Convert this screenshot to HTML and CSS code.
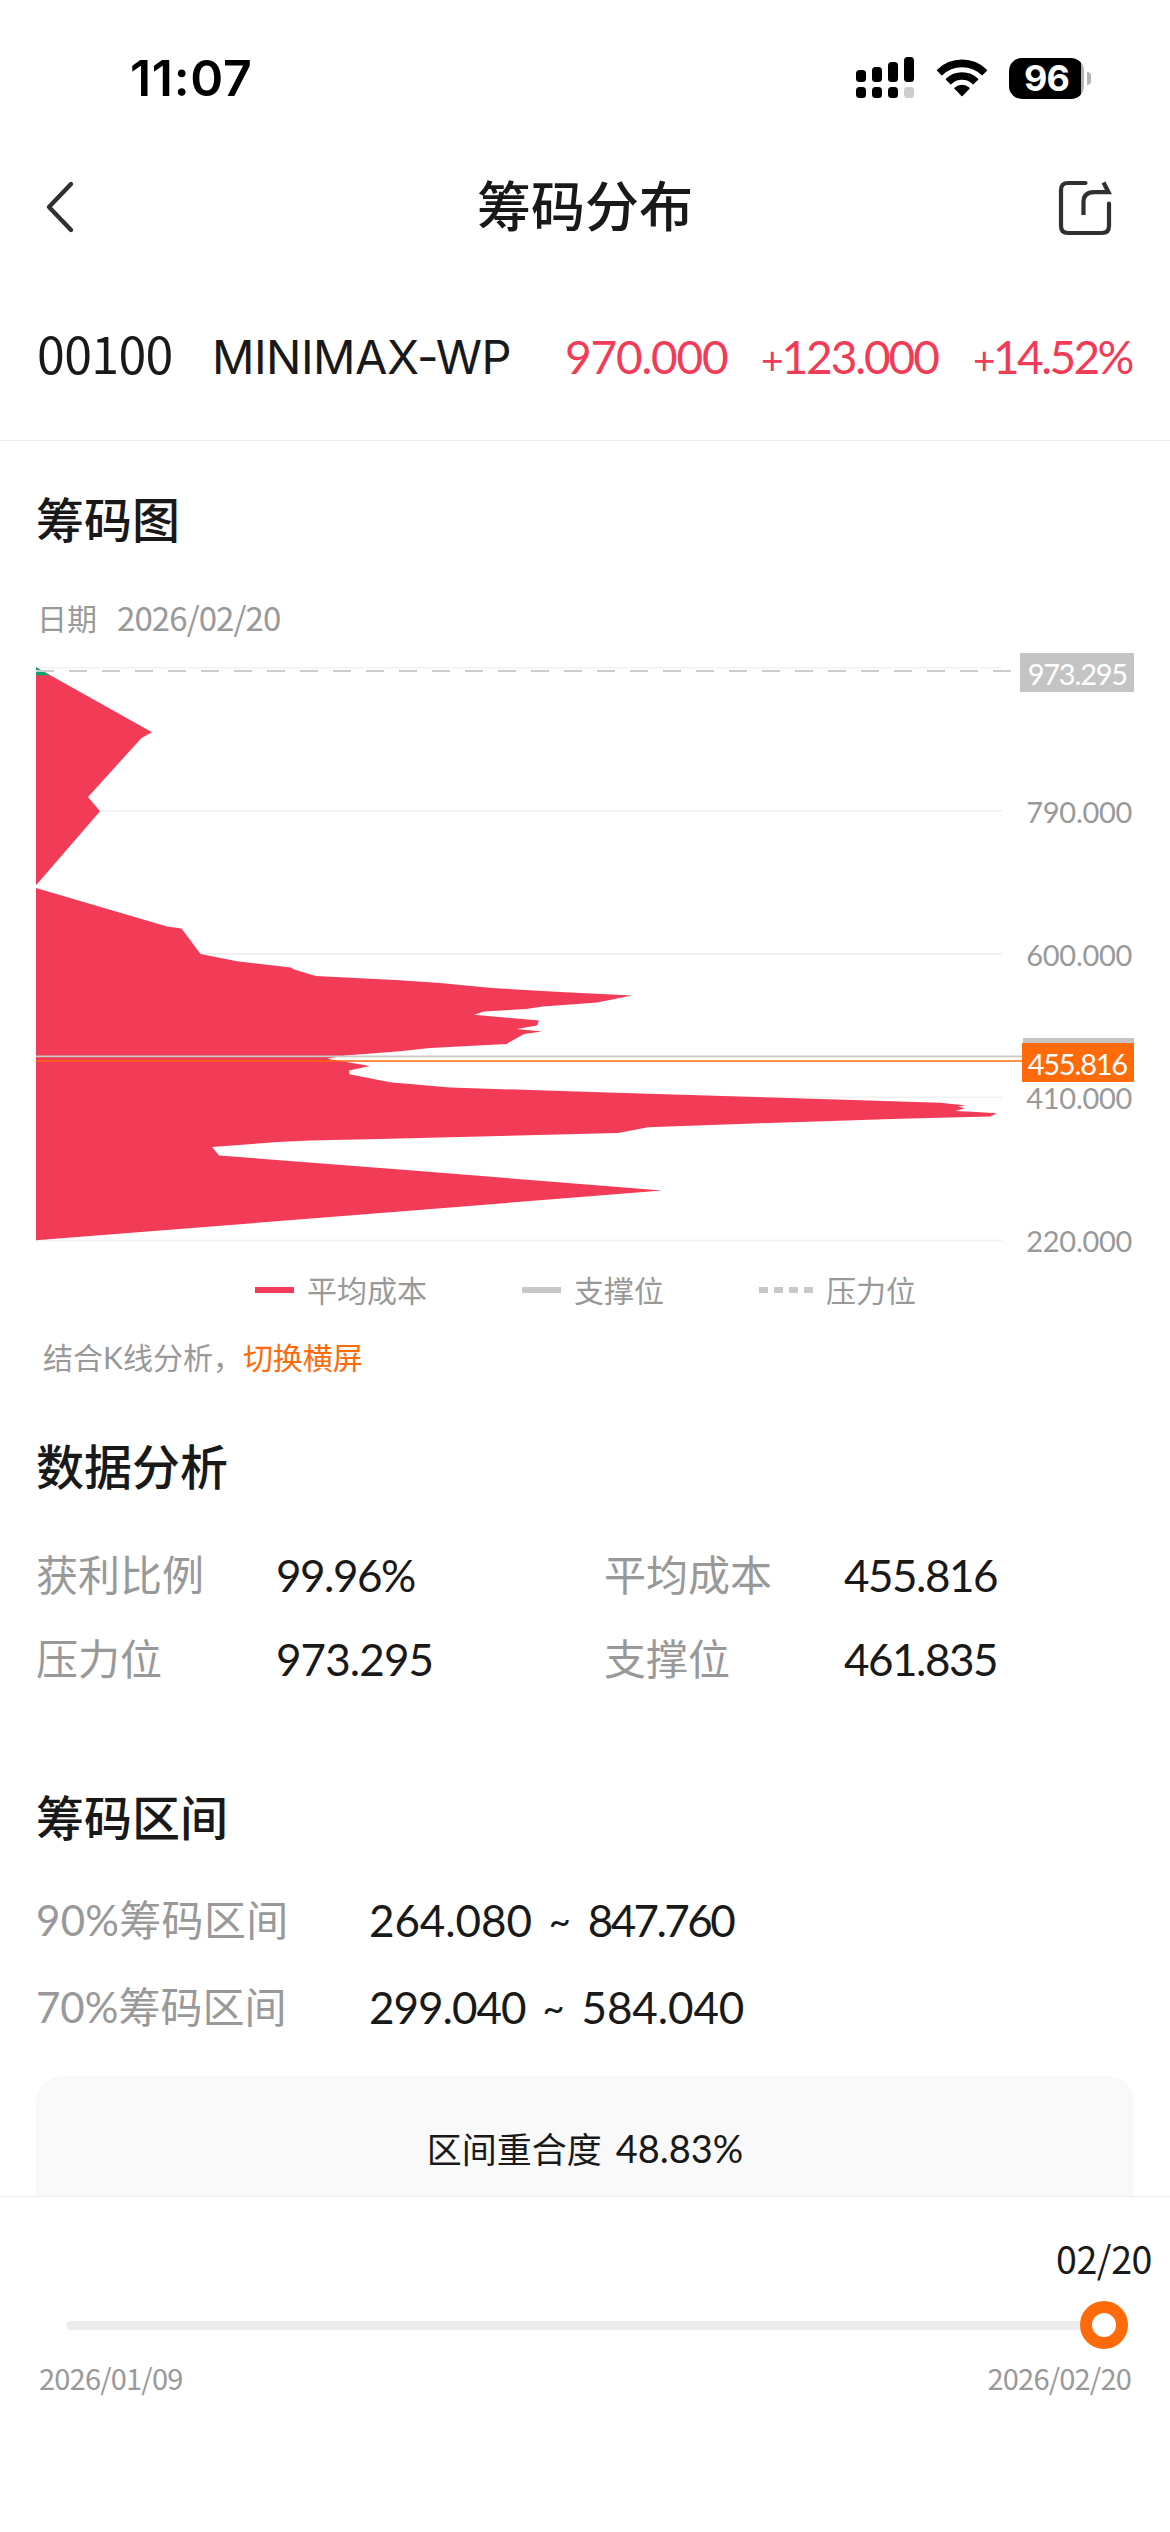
FILE: index.html
```html
<!DOCTYPE html>
<html lang="zh-CN">
<head>
<meta charset="utf-8">
<title>筹码分布</title>
<link rel="stylesheet" href="styles.css">
</head>
<body>
<div class="page">
  <header class="status">
    <span class="clock">11:07</span>
    <div class="indicators">
      <svg class="signal" width="58" height="42" viewBox="0 0 58 42">
        <rect x="0" y="13" width="10" height="12" rx="3.5"/>
        <rect x="16" y="10" width="10" height="15" rx="3.5"/>
        <rect x="32" y="5" width="10" height="20" rx="3.5"/>
        <rect x="48" y="0" width="10" height="25" rx="3.5"/>
        <rect x="0" y="30" width="10" height="11" rx="3.5"/>
        <rect x="16" y="30" width="10" height="11" rx="3.5"/>
        <rect x="32" y="30" width="10" height="11" rx="3.5"/>
        <rect x="48" y="30" width="10" height="11" rx="3.5" fill="#ccc"/>
      </svg>
      <svg class="wifi" width="52" height="42" viewBox="0 0 52 42">
        <path d="M1.6 13.2A35 35 0 0 1 50.4 13.2L46.2 17.6A29 29 0 0 0 5.8 17.6Z" stroke="#000" stroke-width="1.5" stroke-linejoin="round"/>
        <path d="M10.4 22.2A22.5 22.5 0 0 1 41.6 22.2L37.3 26.6A16.4 16.4 0 0 0 14.7 26.6Z" stroke="#000" stroke-width="1.5" stroke-linejoin="round"/>
        <path d="M19 31.3A10.2 10.2 0 0 1 33 31.3L26 38.4Z" stroke="#000" stroke-width="1.5" stroke-linejoin="round"/>
      </svg>
      <div class="battery"><span class="battery-level">96</span><i class="battery-cap"></i></div>
    </div>
  </header>

  <nav class="navbar">
    <svg class="back" width="32" height="56" viewBox="0 0 32 56"><path d="M27 5L5 28L27 51" fill="none" stroke="#303030" stroke-width="4.4" stroke-linecap="round" stroke-linejoin="round"/></svg>
    <h1 class="title">筹码分布</h1>
    <svg class="share" width="58" height="58" viewBox="0 0 58 58" fill="none" stroke="#303030" stroke-width="4.2" stroke-linejoin="miter">
      <path d="M29.5 5H12Q5 5 5 12V48Q5 55 12 55H46Q53 55 53 48V25.5" stroke-linecap="round"/>
      <path d="M27.5 37V24Q27.5 14.2 38 14.2H52.5L47.5 4.5"/>
    </svg>
  </nav>

  <section class="quote">
    <span class="code">00100</span>
    <span class="name">MINIMAX-WP</span>
    <span class="price">970.000</span>
    <span class="change"><span class="sign">+</span>123.000</span>
    <span class="percent"><span class="sign">+</span>14.52%</span>
  </section>

  <main class="content">
    <section>
      <h2 class="heading">筹码图</h2>
      <div class="date"><span>日期</span><span class="date-value">2026/02/20</span></div>
      <svg class="chart" width="1098" height="620" viewBox="36 638 1098 620">
        <g fill="#f1f1f1">
          <rect x="36" y="667" width="966" height="1.5"/>
          <rect x="36" y="810" width="966" height="1.5"/>
          <rect x="36" y="953" width="966" height="2"/>
          <rect x="36" y="1096.5" width="966" height="1.5"/>
          <rect x="36" y="1239.7" width="966" height="1.5"/>
        </g>
        <path fill="#f23b56" d="M36 667.3L152 732.3L141.5 738L88 797L100 811.3L38 883L36 885ZM36 888L167 926.5L181.5 928.5L200.5 954L237 961.2L291 967.5L294 969.5L316 976L400 980.3L440 983L492 988L560 992L632 995.5L597 1002.5L543 1006.5L526 1009L484 1011.5L474 1014.7L539 1020.5L537 1025.5L517 1029L542 1031.5L524 1034L508 1043L507 1044L430 1048L400 1051.3L345 1055.5L327 1058.7L370 1066L349 1070.5L349.5 1074.2L390 1082.2L450 1087.5L600 1092.3L780 1097.7L940 1102.8L966 1105.5L958 1106.5L965 1108.2L955 1111L972 1111.8L997 1113.3L990 1116.6L900 1118.8L760 1123.2L648 1127.3L618 1133L500 1136L380 1139L310 1140.5L278 1142L212 1147L219 1155.5L400 1169.5L662 1190.5L400 1211.5L36 1240.3Z"/>
        <path fill="#0aa56f" d="M36 667.3L50 675.2H36Z"/>
        <path d="M36 671H1012" stroke="#ccc" stroke-width="2" stroke-dasharray="18 15"/>
        <path d="M36 1056.3H1024" stroke="#c9c9c9" stroke-width="1.8"/>
        <path d="M36 1061H1024" stroke="#ff6a0a" stroke-opacity=".75" stroke-width="2"/>
        <rect x="1020" y="653" width="114" height="39" fill="#c4c4c4"/>
        <rect x="1023" y="1038" width="111" height="20" fill="#c4c4c4"/>
        <rect x="1022" y="1043" width="112" height="39" fill="#ff6a0a"/>
        <g class="axis">
          <text x="1132" y="822.8">790.000</text>
          <text x="1132" y="965.8">600.000</text>
          <text x="1132" y="1109.3">410.000</text>
          <text x="1132" y="1252.3">220.000</text>
        </g>
        <g class="axis tag">
          <text x="1127" y="685">973.295</text>
          <text x="1127" y="1075">455.816</text>
        </g>
      </svg>
      <div class="legend">
        <span class="legend-item"><i class="swatch avg"></i>平均成本</span>
        <span class="legend-item"><i class="swatch support"></i>支撑位</span>
        <span class="legend-item"><i class="swatch pressure"></i>压力位</span>
      </div>
      <p class="hint">结合K线分析，<a class="link">切换横屏</a></p>
    </section>

    <section class="analysis">
      <h2 class="heading">数据分析</h2>
      <dl class="stats">
        <dt>获利比例</dt><dd>99.96%</dd>
        <dt>平均成本</dt><dd>455.816</dd>
        <dt>压力位</dt><dd class="loose">973.295</dd>
        <dt>支撑位</dt><dd>461.835</dd>
      </dl>
    </section>

    <section class="ranges">
      <h2 class="heading">筹码区间</h2>
      <dl class="range-list">
        <dt class="wide">90%筹码区间</dt><dd class="range"><span>264.080</span><span class="tilde">~</span><span class="tight">847.760</span></dd>
        <dt>70%筹码区间</dt><dd class="range"><span class="snug">299.040</span><span class="tilde">~</span><span>584.040</span></dd>
      </dl>
      <div class="overlap">区间重合度 <span class="overlap-value">48.83%</span></div>
    </section>
  </main>

  <footer class="timeline">
    <div class="current">02/20</div>
    <div class="slider"><div class="track"></div><div class="knob"></div></div>
    <div class="bounds"><span>2026/01/09</span><span>2026/02/20</span></div>
  </footer>
</div>
</body>
</html>
```
FILE: styles.css
```css
* { box-sizing: border-box; margin: 0; padding: 0; }
body {
  background: #fff;
  color: #191919;
  font-family: Lato, "Noto Sans CJK SC", sans-serif;
}
.page { width: 1170px; height: 2532px; overflow: hidden; display: flex; flex-direction: column; }

.status { height: 156px; padding: 0 79px 0 130px; display: flex; align-items: center; justify-content: space-between; color: #000; }
.clock { font: 600 50px/60px Inter, sans-serif; letter-spacing: 0.7px; }
.indicators { display: flex; align-items: center; }
.signal { margin-right: 22px; }
.wifi { margin-right: 21px; }
.battery { position: relative; width: 75px; height: 41px; border-radius: 13px; background: linear-gradient(90deg, #000 72px, #b3b3b3 72px); margin-right: 7px; text-align: center; }
.battery-level { font: 700 36px/41px Inter, sans-serif; letter-spacing: -1px; color: #fff; }
.battery-cap { position: absolute; left: 78px; top: 14px; width: 4px; height: 13px; border-radius: 0 4px 4px 0; background: #b3b3b3; }

.navbar { height: 102px; padding: 0 56px 0 44px; display: flex; align-items: center; justify-content: space-between; }
.title { font-size: 54px; font-weight: 500; line-height: 72px; margin-left: 38px; }

.quote { height: 183px; padding: 11px 36px 0 37px; border-bottom: 1px solid #eee; display: flex; align-items: baseline; line-height: 166px; white-space: nowrap; }
.code { font-family: "Noto Sans CJK SC", sans-serif; font-size: 50px; letter-spacing: -0.6px; width: 175px; }
.name { font-family: Inter, sans-serif; font-size: 47px; letter-spacing: -0.5px; width: 353px; }
.price, .change, .percent { font-size: 46px; color: #f23b56; }
.price { letter-spacing: -1.2px; width: 196px; }
.change { letter-spacing: -2.1px; width: 212px; }
.percent { letter-spacing: -2.6px; }
.sign { font-size: 39px; }

.content { padding: 0 36px; }
.heading { font-size: 48px; font-weight: 500; line-height: 64px; padding-top: 47px; }
.date { margin-top: 46px; display: flex; gap: 20px; font-size: 30px; line-height: 40px; color: #999; padding-left: 1px; }
.date-value { font-family: "Noto Sans CJK SC", sans-serif; font-size: 33px; line-height: 38px; letter-spacing: -0.9px; }
.chart { display: block; }
.axis { fill: #999; font-size: 29px; letter-spacing: -0.3px; text-anchor: end; }
.tag { fill: #fff; letter-spacing: -1.2px; }
.legend { margin: 12px 0 0 219px; display: flex; line-height: 40px; font-size: 30px; color: #999; }
.legend-item { display: flex; align-items: center; margin-right: 96px; }
.swatch { width: 39px; height: 6px; margin-right: 13px; background: #c8c8c8; }
.legend-item + .legend-item { margin-left: -1px; }
.avg { background: #f23b56; }
.pressure { width: 54px; background: repeating-linear-gradient(90deg, #c8c8c8 0 9px, transparent 9px 15px); }
.hint { margin-top: 27px; padding-left: 7px; font-size: 30px; line-height: 40px; color: #999; }
.link { color: #ff6a0a; }

.analysis .heading { padding-top: 58px; }
.stats { margin-top: 46px; display: grid; grid-template-columns: 240px 328px 240px 1fr; row-gap: 24px; line-height: 60px; }
dt { font-size: 42px; color: #999; }
dd { font-size: 44px; letter-spacing: -1.5px; }
.loose { letter-spacing: -0.9px; }
.wide { letter-spacing: 0.3px; }

.ranges .heading { padding-top: 97px; }
.range-list { margin-top: 40px; display: grid; grid-template-columns: 333px 1fr; row-gap: 27px; line-height: 60px; }
.range { display: flex; gap: 17px; letter-spacing: -0.1px; }
.tilde { font-size: 38px; }
.snug { letter-spacing: -1px; }
.tight { letter-spacing: -2.6px; }
.overlap { margin-top: 39px; height: 120px; line-height: 145px; border-radius: 27px 27px 0 0; background: #f9f9f9; text-align: center; font-size: 35px; overflow: hidden; }
.overlap-value { font-size: 38px; padding-left: 5px; }

.timeline { flex: 1; border-top: 1px solid #eee; padding: 42px 19px 0 39px; }
.current { text-align: right; font-family: "Noto Sans CJK SC", sans-serif; font-size: 37.5px; letter-spacing: -0.4px; line-height: 38px; padding-bottom: 2px; margin-right: -1px; }
.slider { margin: 22px 23px 0 27px; height: 48px; display: flex; align-items: center; }
.track { flex: 1; height: 9px; border-radius: 5px 0 0 5px; background: #ededed; }
.knob { width: 48px; height: 48px; border: 12px solid #ff6a0a; border-radius: 50%; }
.bounds { margin: 9px 20px 0 0; display: flex; justify-content: space-between; font-family: "Noto Sans CJK SC", sans-serif; font-size: 29px; letter-spacing: -0.8px; line-height: 38px; color: #999; }
```
